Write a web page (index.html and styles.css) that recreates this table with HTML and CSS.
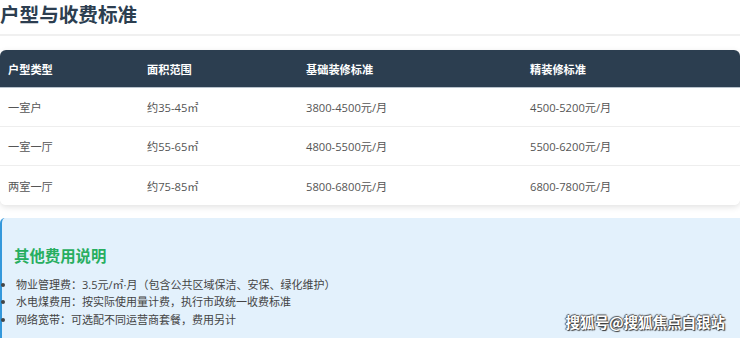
FILE: index.html
```html
<!DOCTYPE html>
<html lang="zh">
<head>
<meta charset="utf-8">
<link rel="stylesheet" href="styles.css">
</head>
<body>
<div class="page">
  <h2 class="title">户型与收费标准</h2>
  <table class="fees">
    <colgroup>
      <col class="c1"><col class="c2"><col class="c3"><col class="c4">
    </colgroup>
    <thead>
      <tr><th>户型类型</th><th>面积范围</th><th>基础装修标准</th><th>精装修标准</th></tr>
    </thead>
    <tbody>
      <tr><td>一室户</td><td>约35-45㎡</td><td>3800-4500元/月</td><td>4500-5200元/月</td></tr>
      <tr><td>一室一厅</td><td>约55-65㎡</td><td>4800-5500元/月</td><td>5500-6200元/月</td></tr>
      <tr><td>两室一厅</td><td>约75-85㎡</td><td>5800-6800元/月</td><td>6800-7800元/月</td></tr>
    </tbody>
  </table>
  <div class="info">
    <h3 class="info-title">其他费用说明</h3>
    <ul class="info-list">
      <li>物业管理费：3.5元/㎡·月（包含公共区域保洁、安保、绿化维护）</li>
      <li>水电煤费用：按实际使用量计费，执行市政统一收费标准</li>
      <li>网络宽带：可选配不同运营商套餐，费用另计</li>
    </ul>
  </div>
  <div class="watermark">搜狐号@搜狐焦点白银站</div>
</div>
</body>
</html>
```
FILE: styles.css
```css
html, body {
  margin: 0;
  padding: 0;
  background: #ffffff;
}
body {
  font-family: "Open Sans", "Noto Sans CJK SC", sans-serif;
  color: #444;
  width: 740px;
  height: 338px;
  overflow: hidden;
}
.page {
  position: relative;
  height: 338px;
  overflow: hidden;
}
.title {
  margin: 3px 0 0 0;
  font-size: 19.6px;
  line-height: 24px;
  font-weight: 700;
  color: #2c3e50;
  padding-bottom: 7px;
  border-bottom: 2px solid #f0f0f0;
}
.fees {
  margin-top: 14px;
  width: 740px;
  border-collapse: separate;
  border-spacing: 0;
  border-radius: 6px;
  overflow: hidden;
  box-shadow: 0 2px 6px rgba(0, 0, 0, 0.12);
  font-size: 11.2px;
  table-layout: fixed;
}
.c1 { width: 139px; }
.c2 { width: 159px; }
.c3 { width: 224px; }
.fees th {
  background: #2c3e50;
  color: #ffffff;
  font-weight: 700;
  text-align: left;
  height: 38px;
  padding: 0 8px;
  box-sizing: border-box;
  border-bottom: 1px solid #b8c2cc;
}
.fees td {
  height: 39px;
  padding: 0 8px;
  box-sizing: border-box;
  color: #555;
  border-bottom: 1px solid #eeeeee;
  background: #fff;
}
.fees tbody tr:last-child td {
  border-bottom: none;
}
.info {
  margin-top: 13px;
  background: #e3f1fc;
  border-left: 2px solid #3498db;
  border-radius: 5px 0 0 0;
  padding: 14px 12px 0 12px;
  height: 120px;
  box-sizing: border-box;
}
.info-title {
  margin: 16px 0 9px 0;
  font-size: 15.4px;
  line-height: 18.5px;
  font-weight: 700;
  color: #27ae60;
}
.info-list {
  margin: 0;
  padding: 0 0 0 2px;
  font-size: 11px;
  line-height: 17.5px;
  color: #444;
}
.watermark {
  position: absolute;
  right: 15px;
  bottom: 6px;
  font-family: "Noto Sans CJK SC", sans-serif;
  font-size: 14.5px;
  font-weight: 700;
  color: #ffffff;
  text-shadow: 1px 1px 1px #333, -1px 0 1px #555, 0 -1px 1px #555;
}
```
